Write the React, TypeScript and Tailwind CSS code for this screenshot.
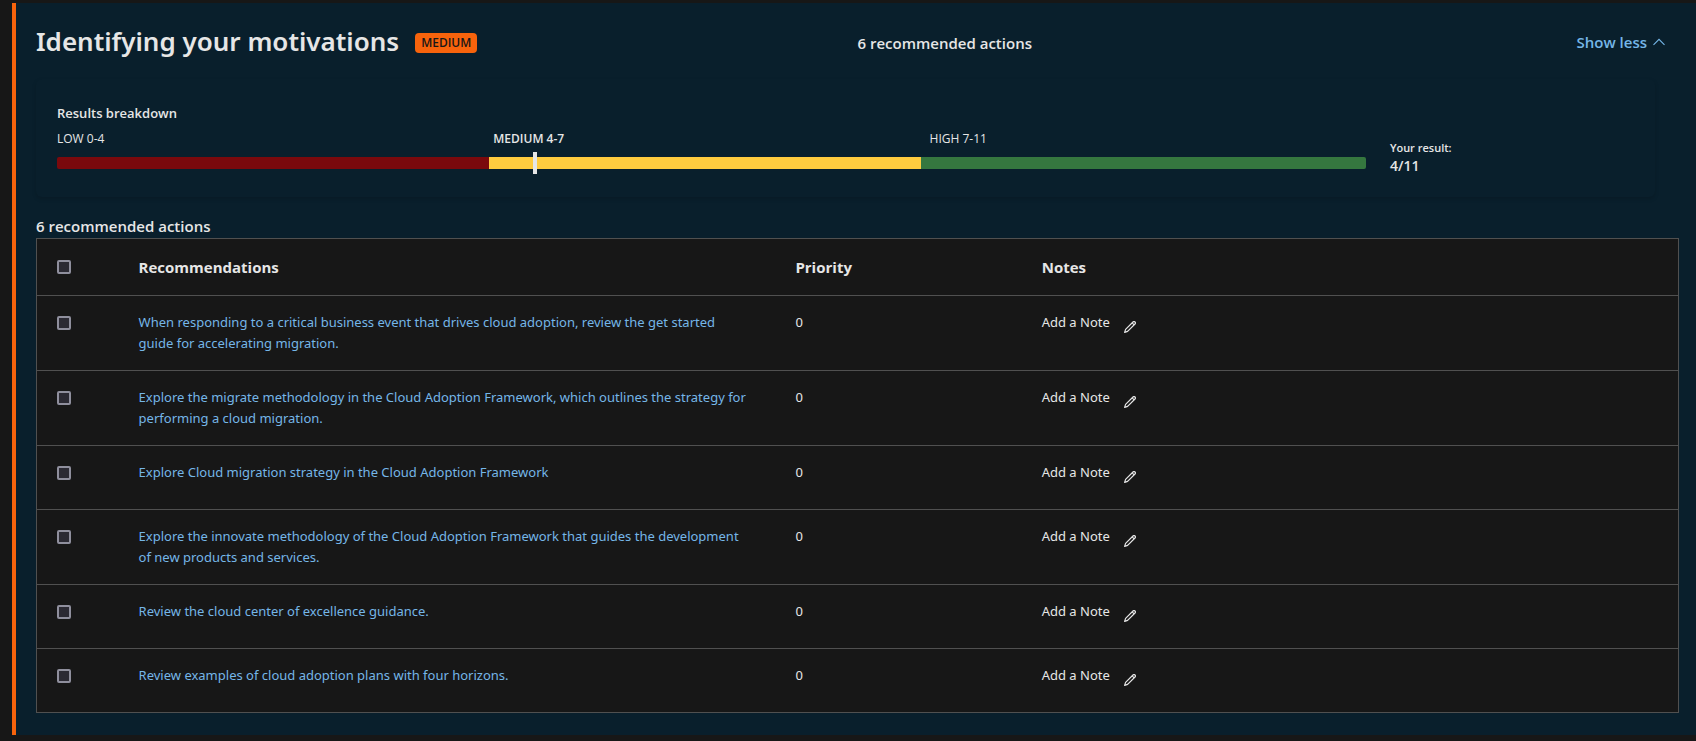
import React, { useState } from 'react';

interface Recommendation {
  id: number;
  title: string;
  priority: number;
}

const recommendations: Recommendation[] = [
  { id: 1, title: 'When responding to a critical business event that drives cloud adoption, review the get started guide for accelerating migration.', priority: 0 },
  { id: 2, title: 'Explore the migrate methodology in the Cloud Adoption Framework, which outlines the strategy for performing a cloud migration.', priority: 0 },
  { id: 3, title: 'Explore Cloud migration strategy in the Cloud Adoption Framework', priority: 0 },
  { id: 4, title: 'Explore the innovate methodology of the Cloud Adoption Framework that guides the development of new products and services.', priority: 0 },
  { id: 5, title: 'Review the cloud center of excellence guidance.', priority: 0 },
  { id: 6, title: 'Review examples of cloud adoption plans with four horizons.', priority: 0 },
];

const score = 4;
const maxScore = 11;

const ChevronIcon: React.FC = () => (
  <svg className="h-3 w-3" viewBox="0 0 12 12" fill="none" stroke="currentColor" strokeWidth={1.1}>
    <path d="M0.5 8.8L6 3.3L11.5 8.8" />
  </svg>
);

const PencilIcon: React.FC = () => (
  <svg className="h-3 w-3" viewBox="0 0 12 12" fill="none" stroke="currentColor" strokeWidth={1.2} strokeLinejoin="round">
    <path d="M0.6 11.4L1.6 8.4L9 1C9.5 0.5 10.4 0.4 11 1C11.6 1.6 11.5 2.5 11 3L3.6 10.4L0.6 11.4Z" />
    <path d="M8.2 1.9L10.1 3.8" />
  </svg>
);

interface TickBoxProps {
  label: string;
  checked: boolean;
  onChange: () => void;
}

const TickBox: React.FC<TickBoxProps> = ({ label, checked, onChange }) => (
  <input
    type="checkbox"
    aria-label={label}
    checked={checked}
    onChange={onChange}
    className="block h-3.5 w-3.5 appearance-none rounded-xs border-2 border-[#8f8f9d] bg-[#2b2a33] checked:bg-[#75b6e7]"
  />
);

const ResultsBreakdown: React.FC = () => (
  <div className="mr-6 rounded-md border border-transparent px-5 pt-[23px] pb-5 shadow-[0_2px_4px_rgba(0,0,0,0.15)]">
    <h3 className="text-[13px] leading-5 font-semibold">Results breakdown</h3>
    <div className="flex gap-6">
      <div className="w-[83%] pt-1">
        <div className="grid grid-cols-3 text-[12px] leading-6">
          <span>LOW 0-4</span>
          <span className="font-semibold">MEDIUM 4-7</span>
          <span>HIGH 7-11</span>
        </div>
        <div className="relative mt-1.5 flex h-3">
          <div className="w-[33%] rounded-l-xs bg-[#7a090d]" />
          <div className="w-[33%] bg-[#ffcc3f]" />
          <div className="w-[34%] rounded-r-xs bg-[#35773f]" />
          {/* score marker */}
          <div
            className="absolute -top-[5px] h-[22px] w-1 bg-[#e6e6e6]"
            style={{ left: `${(score / maxScore) * 100}%` }}
          />
        </div>
      </div>
      <div className="pt-[17px]">
        <p className="text-[11px] leading-4 font-semibold">Your result:</p>
        <p className="text-[14px] leading-5 font-semibold">{score}/{maxScore}</p>
      </div>
    </div>
  </div>
);

const App: React.FC = () => {
  const [selected, setSelected] = useState<number[]>([]);
  const [expanded, setExpanded] = useState<boolean>(true);

  const allSelected = selected.length === recommendations.length;

  const toggleAll = () => {
    setSelected(allSelected ? [] : recommendations.map(r => r.id));
  };

  const toggleOne = (id: number) => {
    setSelected(selected.includes(id) ? selected.filter(s => s !== id) : [...selected, id]);
  };

  return (
    <div className="min-h-screen bg-[#171717] pt-[3px] pl-3 font-['Open_Sans',sans-serif] text-[#e6e6e6]">
      <section className="border-l-4 border-[#f7630c] bg-[#091f2c] pt-5 pr-[17px] pb-[22px] pl-5">
        <div className="flex h-10 items-center">
          <div className="flex w-1/2 items-center gap-4">
            <h2 className="pb-1 font-['Noto_Sans',sans-serif] text-[26px] leading-9 font-semibold">Identifying your motivations</h2>
            <span className="rounded-sm bg-[#f7630c] px-1.5 text-[12px] leading-5 font-semibold text-[#171717]">MEDIUM</span>
          </div>
          <p className="text-[15px] leading-6 font-semibold">{recommendations.length} recommended actions</p>
          <button
            onClick={() => setExpanded(!expanded)}
            className="mr-3.5 ml-auto flex items-center gap-1.5 pb-0.5 text-[15px] leading-6 font-semibold text-[#75b6e7]"
          >
            {expanded ? 'Show less' : 'Show more'}
            <ChevronIcon />
          </button>
        </div>

        {expanded && (
          <div className="pt-4">
            <ResultsBreakdown />

            <p className="pt-[17px] text-[15px] leading-6 font-semibold">{recommendations.length} recommended actions</p>
            <table className="w-full table-fixed border-collapse border border-[#505050] bg-[#171717] text-left text-[13px] leading-[21px]">
              <thead>
                <tr className="border-b border-[#505050] text-[15px] leading-6">
                  <th className="w-[5%] px-5 py-4"><TickBox label="Select all" checked={allSelected} onChange={toggleAll} /></th>
                  <th className="w-[40%] px-5 py-4 font-bold">Recommendations</th>
                  <th className="w-[15%] px-5 py-4 font-bold">Priority</th>
                  <th className="w-[40%] px-5 py-4 font-bold">Notes</th>
                </tr>
              </thead>
              <tbody className="font-['Noto_Sans',sans-serif]">
                {recommendations.map(rec => (
                  <tr key={rec.id} className="border-b border-[#505050] align-top">
                    <td className="px-5 py-5"><TickBox label={rec.title} checked={selected.includes(rec.id)} onChange={() => toggleOne(rec.id)} /></td>
                    <td className="py-4 pr-7 pl-5"><a href="#" className="text-[#75b6e7] hover:underline">{rec.title}</a></td>
                    <td className="px-5 py-4">{rec.priority}</td>
                    <td className="px-5 pt-4">
                      <button className="flex h-[47px] items-start gap-3.5">
                        Add a Note
                        <span className="pt-[9px]"><PencilIcon /></span>
                      </button>
                    </td>
                  </tr>
                ))}
              </tbody>
            </table>
          </div>
        )}
      </section>
    </div>
  );
};

export default App;
